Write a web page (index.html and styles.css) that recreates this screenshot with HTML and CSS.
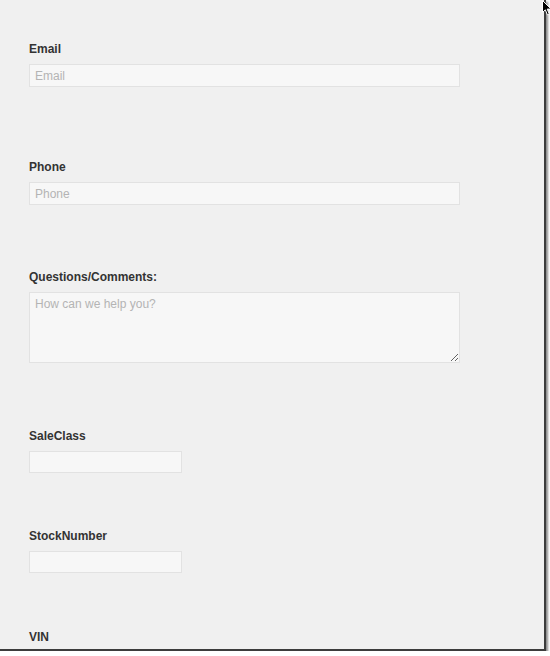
FILE: index.html
```html
<!DOCTYPE html>
<html>
<head>
<meta charset="utf-8">
<link rel="stylesheet" href="styles.css">
</head>
<body>
<div class="window">
  <form class="form">
    <div class="field f-email">
      <label class="label">Email</label>
      <input class="input wide" type="text" placeholder="Email">
    </div>
    <div class="field f-phone">
      <label class="label">Phone</label>
      <input class="input wide" type="text" placeholder="Phone">
    </div>
    <div class="field f-questions">
      <label class="label">Questions/Comments:</label>
      <textarea class="textarea" placeholder="How can we help you?"></textarea>
    </div>
    <div class="field f-sale">
      <label class="label">SaleClass</label>
      <input class="input narrow" type="text">
    </div>
    <div class="field f-stock">
      <label class="label">StockNumber</label>
      <input class="input narrow" type="text">
    </div>
    <div class="field f-vin">
      <label class="label">VIN</label>
    </div>
  </form>
</div>
<svg class="cursor" width="11" height="16" viewBox="0 0 11 16">
  <path d="M0.5 0.5 L0.5 12.5 L3.3 9.8 L5.4 14.8 L7.3 14 L5.2 9.1 L9.2 9.1 Z" fill="#000" stroke="#fff" stroke-width="1"/>
</svg>
</body>
</html>
```
FILE: styles.css
```css
html, body {
  margin: 0;
  padding: 0;
  background: #ffffff;
}
body {
  position: relative;
}
.window {
  width: 544px;
  height: 649px;
  background: #f0f0f0;
  border-right: 2px solid #3c3c3c;
  border-bottom: 2px solid #3c3c3c;
  box-shadow: 2px 2px 2px rgba(0,0,0,0.45);
  overflow: hidden;
  font-family: "Liberation Sans", Arial, sans-serif;
}
.form {
  display: flex;
  flex-direction: column;
  padding: 41px 0 0 29px;
}
.field {
  display: flex;
  flex-direction: column;
  align-items: flex-start;
}
.f-phone { margin-top: 72px; }
.f-questions { margin-top: 64px; }
.f-sale { margin-top: 65px; }
.f-stock { margin-top: 55px; }
.f-vin { margin-top: 56px; }
.label {
  display: block;
  font-size: 12px;
  line-height: 16px;
  font-weight: bold;
  color: #333333;
  margin-bottom: 7px;
}
.input, .textarea {
  box-sizing: border-box;
  margin: 0;
  background: #f7f7f7;
  border: 1px solid #e2e2e2;
  border-radius: 0;
  font-family: "Liberation Sans", Arial, sans-serif;
  font-size: 12px;
  color: #555;
  padding: 0 5px;
  outline: none;
}
.input { height: 23px; }
.input.wide { width: 431px; }
.input.narrow { width: 153px; height: 22px; }
.textarea {
  width: 431px;
  height: 71px;
  padding: 4px 5px;
  resize: both;
}
.input::placeholder, .textarea::placeholder {
  color: #b4b4b4;
}
.cursor {
  position: absolute;
  top: 0;
  left: 542px;
}
```
